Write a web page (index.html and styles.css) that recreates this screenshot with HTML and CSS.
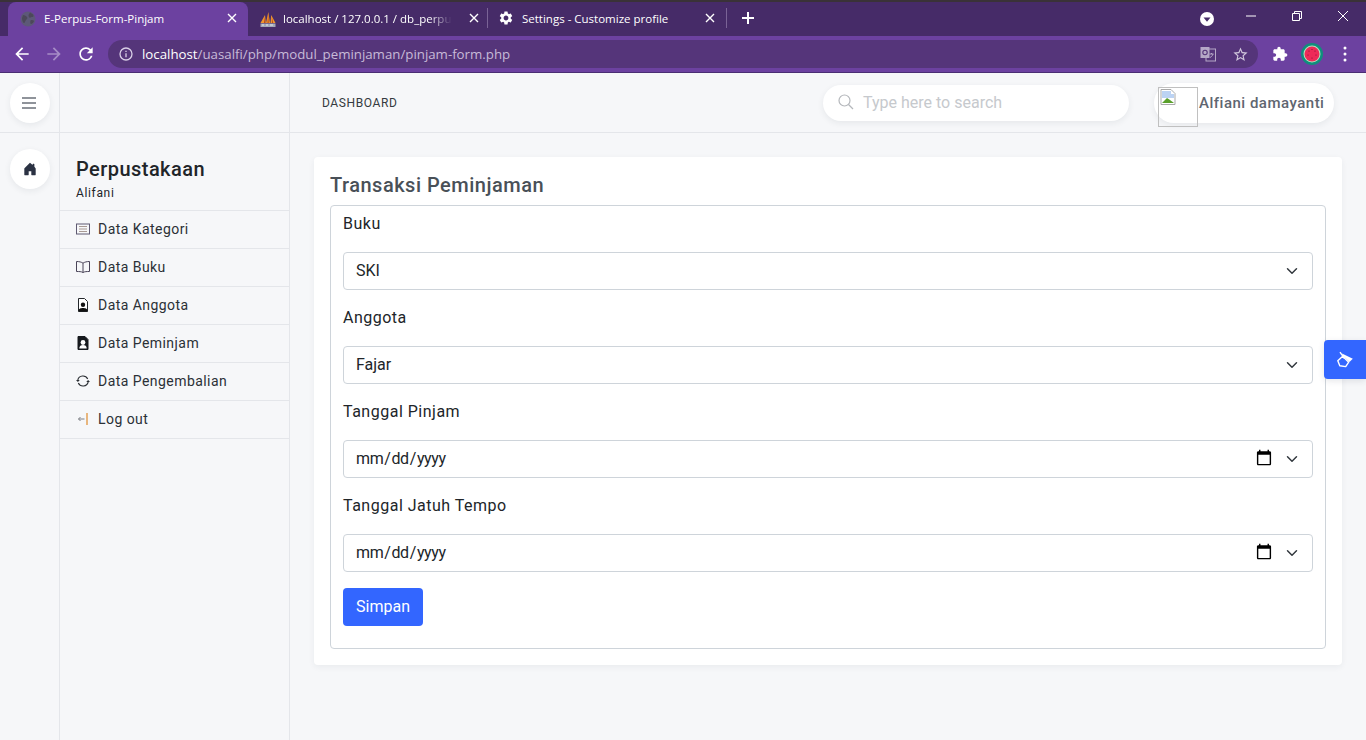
FILE: index.html
```html
<!DOCTYPE html>
<html lang="id">
<head>
  <meta charset="UTF-8">
  <title>E-Perpus-Form-Pinjam</title>
  <link rel="stylesheet" href="styles.css">
</head>
<body>
  <!-- browser chrome -->
  <div class="chrome">
    <div class="tabstrip">
      <div class="tab tab-active">
        <svg class="favicon globe" viewBox="0 0 16 16"><circle cx="8" cy="8" r="7.5" fill="#5d5878"/><path d="M3 4c2 0 3 1 4 2s0 2-1 3-1 3-2 3-2-3-2-5zM10 1.500c1 1 3 1 3.500 3s-2 1-3 2-2-1-2-2 1-2 1.500-3zM11 9c1 0 3 0 3 1s-2 3-3 3-1-4 0-4z" fill="#4c4859"/></svg>
        <span class="tab-title">E-Perpus-Form-Pinjam</span>
        <svg class="tab-close" viewBox="0 0 10 10"><path d="M1 1l8 8M9 1l-8 8"/></svg>
      </div>
      <div class="tab tab-second">
        <svg class="favicon pma" viewBox="0 0 16 16"><path d="M.5 11L5 3l.8 8zM6 11L8.300 0l1.700 11zM10.500 11l.7-8 4.300 8z" fill="#f0962e"/><path d="M4.500 4.500L4 11h1.200zM8.200 2L7.500 11h1.200zM11.800 5l.2 6h1.200z" fill="#b9481c"/><rect x="0.500" y="11.500" width="15" height="3.500" fill="#a3a7b8"/><path d="M2 13h2M6 13h2M10 13h3" stroke="#e2e4ea"/></svg>
        <span class="tab-title tab-fade">localhost / 127.0.0.1 / db_perpus</span>
        <svg class="tab-close" viewBox="0 0 10 10"><path d="M1 1l8 8M9 1l-8 8"/></svg>
      </div>
      <div class="tab-sep"></div>
      <div class="tab">
        <svg class="favicon" viewBox="0 0 24 24"><path fill="#fff" d="M19.14 12.94c.04-.3.06-.61.06-.94 0-.32-.02-.64-.07-.94l2.03-1.58a.49.49 0 0 0 .12-.61l-1.92-3.32a.488.488 0 0 0-.59-.22l-2.39.96c-.5-.38-1.03-.7-1.62-.94l-.36-2.54a.484.484 0 0 0-.48-.41h-3.84c-.24 0-.43.17-.47.41l-.36 2.54c-.59.24-1.13.57-1.62.94l-2.39-.96c-.22-.08-.47 0-.59.22L2.74 8.87c-.12.21-.08.47.12.61l2.03 1.58c-.05.3-.09.63-.09.94s.02.64.07.94l-2.03 1.58a.49.49 0 0 0-.12.61l1.92 3.32c.12.22.37.29.59.22l2.39-.96c.5.38 1.03.7 1.62.94l.36 2.54c.05.24.24.41.48.41h3.84c.24 0 .44-.17.47-.41l.36-2.54c.59-.24 1.13-.56 1.62-.94l2.39.96c.22.08.47 0 .59-.22l1.92-3.32c.12-.22.07-.47-.12-.61l-2.01-1.58zM12 15.600c-1.980 0-3.600-1.620-3.600-3.600s1.620-3.600 3.600-3.600 3.600 1.620 3.600 3.600-1.620 3.600-3.600 3.600z"/></svg>
        <span class="tab-title">Settings - Customize profile</span>
        <svg class="tab-close" viewBox="0 0 10 10"><path d="M1 1l8 8M9 1l-8 8"/></svg>
      </div>
      <div class="tab-sep"></div>
      <svg class="new-tab" viewBox="0 0 12 12"><path d="M6 0v12M0 6h12"/></svg>
      <div class="window-btns">
        <svg class="profile-caret" viewBox="0 0 14 14"><circle cx="7" cy="7" r="7" fill="#fff"/><path d="M3.500 5.500h7L7 9.800z" fill="#462b68"/></svg>
        <svg class="win-min" viewBox="0 0 10 10"><path d="M0 5h10"/></svg>
        <svg class="win-restore" viewBox="0 0 10 10"><path d="M.5 2.500h7v7h-7zM2.500 2.500v-2h7v7h-2"/></svg>
        <svg class="win-close" viewBox="0 0 10 10"><path d="M0 0l10 10M10 0L0 10"/></svg>
      </div>
    </div>
    <div class="toolbar">
      <svg class="nav-icon" viewBox="0 0 24 24"><path fill="#fff" d="M20 11H7.830l5.590-5.590L12 4l-8 8 8 8 1.410-1.410L7.830 13H20v-2z"/></svg>
      <svg class="nav-icon" viewBox="0 0 24 24"><path fill="#a68cc6" d="M4 11h12.170l-5.590-5.590L12 4l8 8-8 8-1.410-1.410L16.170 13H4v-2z"/></svg>
      <svg class="nav-icon" viewBox="0 0 24 24"><path fill="#fff" d="M17.650 6.350A7.958 7.958 0 0 0 12 4c-4.420 0-7.990 3.580-7.990 8s3.570 8 7.990 8c3.730 0 6.840-2.550 7.730-6h-2.080A5.990 5.990 0 0 1 12 18c-3.310 0-6-2.690-6-6s2.690-6 6-6c1.660 0 3.140.69 4.220 1.780L13 11h7V4l-2.350 2.350z"/></svg>
      <div class="omnibox">
        <svg class="info-icon" viewBox="0 0 14 14"><circle cx="7" cy="7" r="6" fill="none" stroke="#d9cfe6" stroke-width="1.300"/><path d="M7 6.200v4M7 3.700v1.300" stroke="#d9cfe6" stroke-width="1.300"/></svg>
        <span class="url"><b>localhost</b>/uasalfi/php/modul_peminjaman/pinjam-form.php</span>
        <svg class="translate-icon" viewBox="0 0 16 16"><rect x="6" y="3" width="9.500" height="12" fill="none" stroke="#b5a8c6"/><rect x="0.500" y="1" width="9" height="11" fill="#b5a8c6"/><circle cx="5" cy="6.500" r="2.200" fill="none" stroke="#55357a" stroke-width="1.100"/><path d="M9.500 8h4M11.500 7v1M13 8c-.5 2-2 3-3 3.500" fill="none" stroke="#b5a8c6"/></svg>
        <svg class="star-icon" viewBox="0 0 24 24"><path fill="#d0c6dc" d="M22 9.240l-7.190-.62L12 2 9.190 8.630 2 9.240l5.460 4.730L5.820 21 12 17.270 18.180 21l-1.630-7.030L22 9.240zM12 15.400l-3.760 2.270 1-4.280-3.320-2.880 4.380-.38L12 6.100l1.710 4.040 4.380.38-3.320 2.880 1 4.280L12 15.400z"/></svg>
      </div>
      <svg class="puzzle-icon" viewBox="0 0 24 24"><path fill="#fff" d="M20.500 11H19V7c0-1.100-.9-2-2-2h-4V3.500C13 2.120 11.880 1 10.500 1S8 2.120 8 3.500V5H4c-1.100 0-1.990.9-1.990 2v3.800H3.500c1.490 0 2.700 1.210 2.700 2.700s-1.210 2.700-2.700 2.700H2V20c0 1.100.9 2 2 2h3.800v-1.500c0-1.490 1.210-2.700 2.700-2.700 1.490 0 2.700 1.210 2.700 2.700V22H17c1.100 0 2-.9 2-2v-4h1.500c1.380 0 2.500-1.120 2.500-2.500S21.880 11 20.500 11z"/></svg>
      <svg class="avatar-icon" viewBox="0 0 22 22"><circle cx="11" cy="11" r="11" fill="#0f8f7c"/><circle cx="11" cy="11" r="8.500" fill="#b8e0c0"/><circle cx="11" cy="11" r="7.500" fill="#ee2a58"/><path d="M8 8h.01M14 8h.01M11 6.500h.01M7 12h.01M15 12h.01M11 15h.01" stroke="#7a1230" stroke-width="1.200" stroke-linecap="round"/></svg>
      <svg class="menu-icon" viewBox="0 0 4 16"><circle cx="2" cy="2" r="1.500"/><circle cx="2" cy="8" r="1.500"/><circle cx="2" cy="14" r="1.500"/></svg>
    </div>
  </div>

  <!-- page -->
  <div class="app">
    <div class="rail-top">
      <button class="round-btn">
        <svg class="burger" viewBox="0 0 14 12"><path d="M0 1h14M0 6h14M0 11h14"/></svg>
      </button>
    </div>
    <div class="brand-top"></div>
    <header class="topbar">
      <span class="crumb">DASHBOARD</span>
      <div class="search">
        <svg class="search-icon" viewBox="0 0 16 16"><circle cx="6.500" cy="6.500" r="5.500"/><path d="M10.500 10.500l4.500 4.500"/></svg>
        <span class="search-text">Type here to search</span>
      </div>
      <div class="user">
        <div class="user-img">
          <svg viewBox="0 0 16 16"><path d="M1 .5h10l4 4v11H1z" fill="#fff" stroke="#a9a9a9"/><path d="M2 2h9v3h3v4H2z" fill="#bcd3f3"/><path d="M2 14l5-5 3 2 4 3z" fill="#5aa02c"/></svg>
        </div>
        <span class="user-name">Alfiani damayanti</span>
      </div>
    </header>

    <nav class="rail">
      <button class="round-btn">
        <svg class="home" viewBox="0 0 16 16"><path d="M6.500 14.500v-4h3v4c0 .3.200.5.500.5h4c.3 0 .5-.2.500-.5v-7a.5.500 0 0 0-.150-.35L13 5.300V2.500a.5.500 0 0 0-.5-.5h-1a.5.500 0 0 0-.5.500v1L8.350 1.150a.5.500 0 0 0-.7 0l-6 6A.5.500 0 0 0 1.500 7.500v7c0 .3.200.5.500.5h4c.3 0 .5-.2.500-.5z"/></svg>
      </button>
    </nav>

    <aside class="sidebar">
      <div class="brand">
        <h1>Perpustakaan</h1>
        <p>Alifani</p>
      </div>
      <ul class="menu">
        <li>
          <svg viewBox="0 0 14 14"><rect x=".5" y="2" width="13" height="10" fill="none" stroke="#5f5a72"/><path d="M3 4.500h8M3 7h8M3 9.500h8" stroke="#a89a94"/></svg>
          Data Kategori
        </li>
        <li>
          <svg viewBox="0 0 14 14"><path d="M7 3.200C5.500 2 3 1.500.5 1.500v10C3 11.500 5.500 11.500 7 12.500c1.500-1 4-1 6.500-1v-10C11 1.500 8.500 2 7 3.200zM7 3.200v9.300" fill="none" stroke="#4a4458"/></svg>
          Data Buku
        </li>
        <li>
          <svg viewBox="0 0 14 14"><path d="M2.500.500h6l3 3V13.500h-9z" fill="#fff" stroke="#23272b"/><circle cx="7" cy="6.800" r="2.200" fill="#111"/><path d="M2.500 13.500c0-3 2-3.500 4.500-3.500s4.500.5 4.500 3.500z" fill="#111"/></svg>
          Data Anggota
        </li>
        <li>
          <svg viewBox="0 0 14 14"><path d="M2 .5h7l3 3V13.500H2z" fill="#16191d" stroke="#16191d"/><circle cx="7" cy="6.500" r="2.400" fill="#fff"/><path d="M3.300 12.500c0-2.500 1.500-3.500 3.700-3.500s3.700 1 3.700 3.500z" fill="#fff"/></svg>
          Data Peminjam
        </li>
        <li>
          <svg viewBox="0 0 14 14"><path d="M1.800 6A5.300 5.300 0 0 1 11.700 5M12.200 8A5.300 5.300 0 0 1 2.300 9" fill="none" stroke="#2a2e33" stroke-width="1.100"/><path d="M0 6h3.800L1.900 8zM14 8h-3.800L12.100 6z" fill="#2a2e33"/></svg>
          Data Pengembalian
        </li>
        <li>
          <svg viewBox="0 0 14 14"><path d="M11 1v12" stroke="#e08a2a" stroke-width="1.200"/><path d="M8.500 7H2.500M4.500 5l-2 2 2 2" fill="none" stroke="#7c7f85"/></svg>
          Log out
        </li>
      </ul>
    </aside>

    <main class="content">
      <section class="card">
        <h2>Transaksi Peminjaman</h2>
        <form class="form-box">
          <div class="field">
            <label for="buku">Buku</label>
            <select id="buku" class="control"><option>SKI</option></select>
          </div>
          <div class="field">
            <label for="anggota">Anggota</label>
            <select id="anggota" class="control"><option>Fajar</option></select>
          </div>
          <div class="field">
            <label for="tgl-pinjam">Tanggal Pinjam</label>
            <input id="tgl-pinjam" class="control" type="date">
          </div>
          <div class="field">
            <label for="tgl-tempo">Tanggal Jatuh Tempo</label>
            <input id="tgl-tempo" class="control" type="date">
          </div>
          <button class="btn-save" type="button">Simpan</button>
        </form>
      </section>
    </main>
  </div>

  <button class="theme-btn">
    <svg viewBox="0 0 16 16"><path d="M.8 8.700L5.700 4.200l6 6-3 4.400-5.900-.9z" fill="none" stroke="#fff" stroke-width="1.400" stroke-linejoin="round"/><path d="M5 1.500l10.800 5.200-3.300 3.400-6.800-6.600z" fill="#fff"/><path d="M3 .2l4.500 6.300" stroke="#fff" stroke-width="1.400"/></svg>
  </button>
</body>
</html>
```

FILE: styles.css
```css
* {
  box-sizing: border-box;
}

html,
body {
  height: 100%;
}

body {
  margin: 0;
  overflow: hidden;
  background-color: #f6f7f9;
  color: #212529;
  font-family: Roboto, "Liberation Sans", sans-serif;
}

/* browser chrome */
.chrome {
  height: 73px;
  background-color: #6c41a0;
  border-top: 2px solid #3a3238;
  border-bottom: 1px solid #4a2d73;
}

.tabstrip {
  display: flex;
  align-items: center;
  height: 34px;
  padding-left: 8px;
  background-color: #462b68;
  color: #fff;
  font-family: "Open Sans", sans-serif;
  font-size: 11.5px;
}

.tab {
  display: flex;
  align-items: center;
  gap: 8px;
  width: 238px;
  height: 34px;
  padding: 0 11px 2px 10px;
}

.tab-active {
  width: 240px;
  padding-left: 12px;
  background-color: #6c41a0;
  border-radius: 8px 8px 0 0;
}

.tab-second {
  width: 239px;
  padding-left: 11px;
}

.favicon {
  flex: none;
  width: 16px;
  height: 16px;
}

.globe {
  margin-top: 2px;
}

.pma {
  margin: 4px -1px 0 1px;
}

.tab-title {
  flex: 1;
  white-space: nowrap;
}

.tab-fade {
  -webkit-mask-image: linear-gradient(to right, #000 84%, transparent 97%);
  mask-image: linear-gradient(to right, #000 84%, transparent 97%);
}

.tab-close {
  flex: none;
  width: 10px;
  height: 10px;
  stroke: #fff;
  stroke-width: 1.400;
  margin-left: 4px;
}

.tab-sep {
  flex: none;
  width: 1px;
  height: 20px;
  margin-bottom: 2px;
  background-color: #7a6396;
}

.new-tab {
  width: 12px;
  height: 12px;
  margin: 0 0 2px 15px;
  stroke: #fff;
  stroke-width: 2;
}

.window-btns {
  display: flex;
  align-items: center;
  margin-left: auto;
  padding-bottom: 6px;
}

.profile-caret {
  width: 14px;
  height: 14px;
  margin: 6px 32px 0 0;
}

.window-btns svg:not(.profile-caret) {
  width: 10px;
  height: 10px;
  fill: none;
  stroke: #fff;
  stroke-width: 1;
}

.win-min {
  margin-right: 36px;
}

.win-restore {
  margin-right: 36px;
}

.win-close {
  margin-right: 18px;
}

.toolbar {
  display: flex;
  align-items: center;
  height: 36px;
  padding-left: 12px;
}

.nav-icon {
  flex: none;
  width: 20px;
  height: 20px;
  margin-right: 12px;
}

.omnibox {
  flex: none;
  display: flex;
  align-items: center;
  width: 1150px;
  height: 28px;
  padding-left: 11px;
  background-color: #55357a;
  border-radius: 14px;
}

.info-icon {
  flex: none;
  width: 14px;
  height: 14px;
  margin-right: 9px;
}

.url {
  flex: 1;
  color: #c8bbd8;
  font-family: "Open Sans", sans-serif;
  font-size: 13.27px;
  white-space: nowrap;
}

.url b {
  color: #fff;
  font-weight: 400;
}

.translate-icon {
  flex: none;
  width: 16px;
  height: 16px;
  margin-right: 16px;
}

.star-icon {
  flex: none;
  width: 17px;
  height: 17px;
  margin-right: 9px;
}

.puzzle-icon {
  flex: none;
  width: 16px;
  height: 16px;
  margin-left: 14px;
}

.avatar-icon {
  flex: none;
  width: 22px;
  height: 22px;
  margin-left: 13px;
}

.menu-icon {
  flex: none;
  width: 4px;
  height: 16px;
  margin-left: 20px;
  fill: #fff;
}

/* page grid */
.app {
  display: grid;
  grid-template-columns: 60px 230px 1fr;
  grid-template-rows: 60px 1fr;
  height: 667px;
}

.rail-top,
.brand-top,
.topbar {
  border-bottom: 1px solid #e4e6ea;
}

.rail-top,
.rail {
  display: flex;
  justify-content: center;
  border-right: 1px solid #e4e6ea;
}

.rail-top {
  align-items: center;
  padding-top: 1px;
}

.rail {
  align-items: flex-start;
  padding-top: 16px;
}

.brand-top,
.sidebar {
  border-right: 1px solid #e4e6ea;
}

.round-btn {
  display: flex;
  align-items: center;
  justify-content: center;
  width: 40px;
  height: 40px;
  padding: 0;
  background-color: #fff;
  border: 0;
  border-radius: 50%;
  box-shadow: 0 2px 6px rgba(40, 50, 70, 0.08);
}

.burger {
  width: 14px;
  height: 12px;
  margin-right: 1px;
  stroke: #8f939a;
  stroke-width: 2;
}

.home {
  width: 14px;
  height: 14px;
  fill: #2b3243;
}

/* top bar */
.topbar {
  display: flex;
  align-items: center;
  padding: 1px 32px 0;
}

.crumb {
  font-size: 12px;
  letter-spacing: 0.6px;
  color: #343a40;
}

.search {
  display: flex;
  align-items: center;
  gap: 9px;
  width: 306px;
  height: 36px;
  margin-left: auto;
  padding: 0 0 2px 15px;
  background-color: #fff;
  border-radius: 18px;
  box-shadow: 0 2px 6px rgba(40, 50, 70, 0.08);
}

.search-icon {
  width: 16px;
  height: 16px;
  fill: none;
  stroke: #b4b7bb;
  stroke-width: 1.200;
}

.search-text {
  color: #c6c9cd;
  font-size: 16px;
}

.user {
  display: flex;
  align-items: flex-start;
  gap: 1px;
  width: 180px;
  height: 40px;
  margin-left: 25px;
  padding-left: 4px;
  background-color: #fff;
  border-radius: 20px;
  box-shadow: 0 2px 6px rgba(40, 50, 70, 0.08);
}

.user-img {
  flex: none;
  width: 40px;
  height: 40px;
  margin-top: 4px;
  padding: 1px;
  border: 1px solid #c0c0c0;
}

.user-img svg {
  display: block;
  width: 16px;
  height: 16px;
}

.user-name {
  color: #5f6670;
  font-size: 15px;
  font-weight: 500;
  letter-spacing: 0.5px;
  line-height: 40px;
}

/* sidebar */
.brand {
  height: 77px;
  padding: 24px 16px 0;
}

.brand h1 {
  margin: 0;
  font-size: 20px;
  font-weight: 500;
  line-height: 24px;
  letter-spacing: 0.45px;
  color: #212529;
}

.brand p {
  margin: 4px 0 0;
  font-size: 12px;
  line-height: 16px;
  letter-spacing: 0.65px;
}

.menu {
  margin: 0;
  padding: 0;
  list-style: none;
  border-top: 1px solid #e4e6ea;
}

.menu li {
  display: flex;
  align-items: center;
  gap: 8px;
  height: 38px;
  padding: 0 0 2px 16px;
  border-bottom: 1px solid #e4e6ea;
  font-size: 14px;
  letter-spacing: 0.45px;
  color: #2b3036;
}

.menu svg {
  flex: none;
  width: 14px;
  height: 14px;
}

/* form card */
.content {
  padding: 24px;
}

.card {
  height: 508px;
  padding: 16px;
  background-color: #fff;
  border-radius: 4px;
  box-shadow: 0 2px 6px rgba(40, 50, 70, 0.06);
}

.card h2 {
  margin: 0 0 8px;
  font-size: 20px;
  font-weight: 500;
  line-height: 24px;
  letter-spacing: 0.5px;
  color: #495057;
}

.form-box {
  height: 444px;
  padding: 6px 12px 0;
  border: 1px solid #ced4da;
  border-radius: 4px;
}

.field {
  margin-bottom: 16px;
}

.field label {
  display: block;
  margin-bottom: 16px;
  font-size: 16px;
  line-height: 24px;
  letter-spacing: 0.5px;
}

.control {
  display: block;
  width: 100%;
  height: 38px;
  padding: 0 12px 2px;
  background: #fff url("data:image/svg+xml,%3csvg xmlns='http://www.w3.org/2000/svg' viewBox='0 0 16 16'%3e%3cpath fill='none' stroke='%23343a40' stroke-linecap='round' stroke-linejoin='round' stroke-width='2' d='M2 5l6 6 6-6'/%3e%3c/svg%3e") no-repeat right 12px center / 16px 12px;
  border: 1px solid #ced4da;
  border-radius: 4px;
  color: #212529;
  font-family: inherit;
  font-size: 16px;
  appearance: none;
  -webkit-appearance: none;
}

input.control {
  padding-right: 39px;
}

input.control::-webkit-datetime-edit {
  margin-left: -1px;
  letter-spacing: -0.4px;
}

input.control::-webkit-calendar-picker-indicator {
  margin: 0;
  padding: 0;
  width: 18px;
  height: 18px;
}

.btn-save {
  display: block;
  width: 80px;
  height: 38px;
  padding: 0 0 2px;
  background-color: #3366ff;
  border: 0;
  border-radius: 4px;
  color: #fff;
  font-family: inherit;
  font-size: 16px;
}

.theme-btn {
  position: absolute;
  top: 340px;
  right: 0;
  display: flex;
  align-items: center;
  justify-content: center;
  width: 42px;
  height: 39px;
  padding: 0;
  background-color: #3366ff;
  border: 0;
  border-radius: 4px 0 0 4px;
  box-shadow: 0 2px 6px rgba(40, 50, 70, 0.12);
}

.theme-btn svg {
  width: 16px;
  height: 16px;
  overflow: visible;
}
```
